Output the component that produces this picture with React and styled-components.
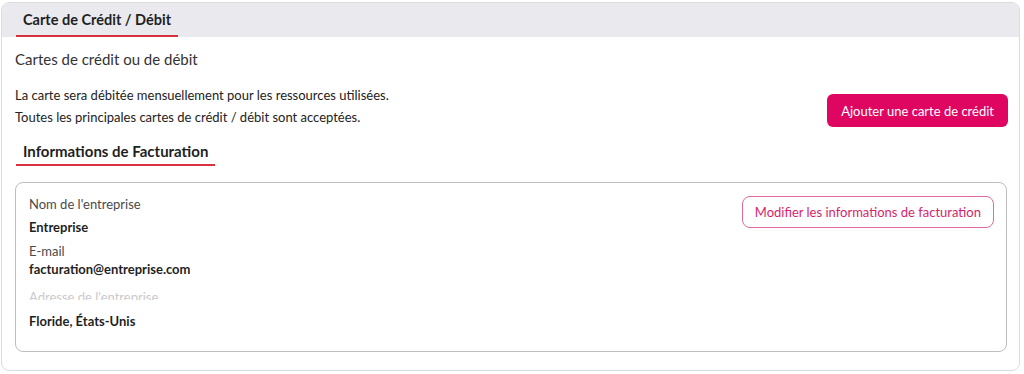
import React from "react";
import { styled, createGlobalStyle } from "styled-components";

const GlobalStyle = createGlobalStyle`
  body {
    margin: 0;
    background: #ffffff;
    font-family: "Lato", "Liberation Sans", sans-serif;
    color: #2b2b2b;
  }
`;

const App = () => {
  return (
    <>
      <GlobalStyle />
      <Page>
        <Card>
          <CardHeader>
            <Tab>Carte de Crédit / Débit</Tab>
          </CardHeader>
          <CardBody>
            <SubTitle>Cartes de crédit ou de débit</SubTitle>
            <CardRow>
              <Notes>
                <Note>La carte sera débitée mensuellement pour les ressources utilisées.</Note>
                <Note>Toutes les principales cartes de crédit / débit sont acceptées.</Note>
              </Notes>
              <PrimaryButton>Ajouter une carte de crédit</PrimaryButton>
            </CardRow>
            <SectionTitle>Informations de Facturation</SectionTitle>
            <InfoBox>
              <Fields>
                <Label>Nom de l'entreprise</Label>
                <Value>Entreprise</Value>
                <Label $gap={6}>E-mail</Label>
                <Value $gap={0}>facturation@entreprise.com</Value>
                <FadedLabel>Adresse de l'entreprise</FadedLabel>
                <Value>Floride, États-Unis</Value>
              </Fields>
              <OutlineButton>Modifier les informations de facturation</OutlineButton>
            </InfoBox>
          </CardBody>
        </Card>
      </Page>
    </>
  );
};

const Page = styled.div`
  padding: 2px 4px 2px 1px;
`;

const Card = styled.div`
  height: 369px;
  box-sizing: border-box;
  border: 1px solid #dcdce0;
  border-radius: 8px;
  overflow: hidden;
  display: flex;
  flex-direction: column;
`;

const CardHeader = styled.div`
  height: 34px;
  background: #e9e9ee;
  padding-left: 14px;
  display: flex;
`;

const Tab = styled.div`
  display: flex;
  align-items: center;
  padding: 1px 7px 0;
  font-size: 14.5px;
  font-weight: 700;
  color: #1f1f1f;
  border-bottom: 2px solid #d8313f;
`;

const CardBody = styled.div`
  padding: 12px 12px 0 13px;
  display: flex;
  flex-direction: column;
`;

const SubTitle = styled.div`
  font-size: 15px;
  color: #333;
  line-height: 20px;
`;

const CardRow = styled.div`
  display: flex;
  justify-content: space-between;
  align-items: flex-end;
  margin-top: 17px;
  padding-right: 0;
`;

const Notes = styled.div`
  display: flex;
  flex-direction: column;
  gap: 4px;
`;

const Note = styled.div`
  font-size: 13px;
  line-height: 18px;
  color: #222;
`;

const PrimaryButton = styled.button`
  height: 33px;
  padding: 0 14px;
  margin-right: -1px;
  margin-bottom: -1px;
  border: none;
  border-radius: 6px;
  background: #df0662;
  color: #ffffff;
  font-family: inherit;
  font-size: 13px;
`;

const SectionTitle = styled.div`
  align-self: flex-start;
  margin-top: 16px;
  margin-left: 1px;
  padding: 0 7px 4px;
  font-size: 15px;
  font-weight: 700;
  color: #1f1f1f;
  border-bottom: 2px solid #d8313f;
`;

const InfoBox = styled.div`
  margin-top: 16px;
  height: 170px;
  box-sizing: border-box;
  border: 1px solid #bdbdc2;
  border-radius: 8px;
  padding: 12px 12px 0 13px;
  display: flex;
  justify-content: space-between;
  align-items: flex-start;
`;

const Fields = styled.div`
  display: flex;
  flex-direction: column;
`;

const Label = styled.div`
  font-size: 13px;
  line-height: 18px;
  color: #4a4a4a;
  margin-top: ${(p) => p.$gap || 0}px;
`;

const FadedLabel = styled.div`
  height: 12px;
  margin-top: 10px;
  margin-bottom: 7px;
  overflow: hidden;
  font-size: 13px;
  line-height: 18px;
  color: #cacacd;
`;

const Value = styled.div`
  font-size: 13px;
  font-weight: 700;
  line-height: 18px;
  color: #1f1f1f;
  margin-top: ${(p) => (p.$gap === undefined ? 5 : p.$gap)}px;
`;

const OutlineButton = styled.button`
  height: 32px;
  margin-top: 1px;
  padding: 0 12px;
  background: #ffffff;
  border: 1px solid #e06a9c;
  border-radius: 8px;
  color: #d61f6c;
  font-family: inherit;
  font-size: 13px;
`;

export default App;
